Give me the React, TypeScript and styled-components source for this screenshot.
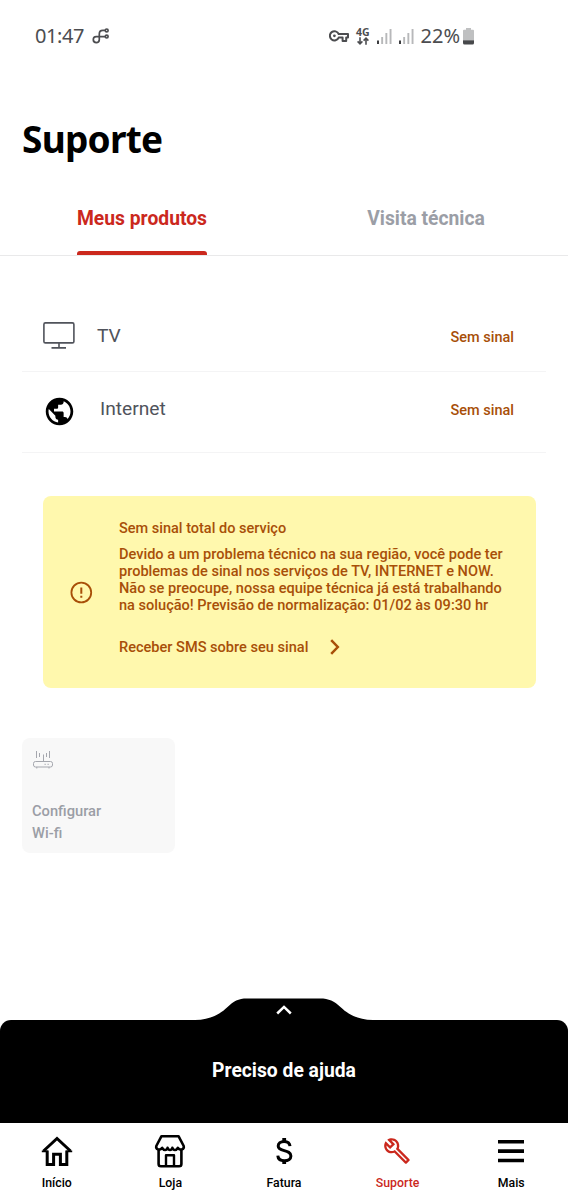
import React from "react";
import styled, { createGlobalStyle } from "styled-components";
import { MdOutlineBuild, MdPublic } from "react-icons/md";

const palette = {
  red: "#cb281d",
  muted: "#9b9ea6",
  slate: "#50535b",
  warning: "#a84f08",
  warningBg: "#fff8ad",
  line: "#f4f4f5",
};

const GlobalStyle = createGlobalStyle`
  *, *::before, *::after { box-sizing: border-box; }
  body { margin: 0; background: #fff; font-family: Roboto, "Liberation Sans", sans-serif; }
  svg { display: block; flex: none; }
`;

const Screen = styled.div`
  width: 568px;
  height: 1200px;
  display: flex;
  flex-direction: column;
  overflow: hidden;
  background: #fff;
`;

const StatusBar = styled.header`
  height: 72px;
  padding: 0 94px 0 35px;
  display: flex;
  align-items: center;
  justify-content: space-between;
  color: #4c4d50;
  font-family: "Noto Sans", sans-serif;
  font-size: 20px;
`;

const StatusGroup = styled.div<{ $gap: number }>`
  display: flex;
  align-items: center;
  gap: ${(p) => p.$gap}px;
`;

const StatusText = styled.span<{ $spacing: number }>`
  letter-spacing: ${(p) => p.$spacing}px;
  line-height: 24px;
`;

const Title = styled.h1`
  height: 110px;
  margin: 0;
  padding: 42px 22px 0;
  font-family: "Noto Sans", sans-serif;
  font-size: 37px;
  line-height: 50px;
  font-weight: 700;
  letter-spacing: -0.75px;
  color: #000;
`;

const Tabs = styled.nav`
  height: 74px;
  display: grid;
  grid-template-columns: 1fr 1fr;
  justify-items: center;
  border-bottom: 1px solid #e9e9ea;
`;

const Tab = styled.a<{ $active?: boolean }>`
  display: flex;
  flex-direction: column;
  justify-content: space-between;
  padding-top: 25px;
  height: 73px;
  font-size: 19.3px;
  line-height: 24px;
  font-weight: 700;
  color: ${(p) => (p.$active ? palette.red : palette.muted)};
  &::after {
    content: "";
    height: 4px;
    border-radius: 3px 3px 0 0;
    background: ${(p) => (p.$active ? palette.red : "transparent")};
  }
`;

const Products = styled.ul`
  list-style: none;
  margin: 44px 22px 0;
  padding: 0;
`;

const Product = styled.li<{ $height: number; $drop: number }>`
  height: ${(p) => p.$height}px;
  padding: ${(p) => p.$drop}px 32px 0 21px;
  display: flex;
  align-items: flex-start;
  border-bottom: 1px solid ${palette.line};
`;

const ProductIcon = styled.span<{ $width: number }>`
  width: ${(p) => p.$width}px;
  margin-top: -2px;
`;

const ProductName = styled.span`
  flex: 1;
  font-size: 19.2px;
  line-height: 24px;
  color: ${palette.slate};
`;

const ProductState = styled.span`
  padding-top: 2px;
  font-size: 14.5px;
  line-height: 24px;
  font-weight: 500;
  color: ${palette.warning};
`;

const Notice = styled.section`
  width: 493px;
  height: 192px;
  margin: 43px 0 0 43px;
  padding-left: 27px;
  display: flex;
  align-items: center;
  gap: 26px;
  border-radius: 8px;
  background: ${palette.warningBg};
  color: ${palette.warning};
  font-size: 14.57px;
  font-weight: 500;
`;

const NoticeBody = styled.div`
  height: 100%;
  padding-top: 23px;
  white-space: nowrap;
`;

const NoticeTitle = styled.h2`
  margin: 0 0 7px;
  font: inherit;
  font-size: 14.5px;
  line-height: 20px;
`;

const NoticeText = styled.p`
  margin: 0;
  line-height: 17px;
`;

const NoticeLink = styled.a`
  margin-top: 23px;
  display: flex;
  align-items: center;
  gap: 22px;
  line-height: 20px;
`;

const Tile = styled.button`
  width: 153px;
  height: 115px;
  margin: 50px 0 0 22px;
  padding: 12px 10px 9px;
  display: flex;
  flex-direction: column;
  align-items: flex-start;
  justify-content: space-between;
  border: 0;
  border-radius: 8px;
  background: #f8f8f8;
  color: ${palette.muted};
  font-family: inherit;
  font-size: 14.7px;
  line-height: 21.5px;
  font-weight: 500;
  text-align: left;
`;

const HelpSheet = styled.section`
  margin-top: auto;
  display: flex;
  flex-direction: column;
  align-items: center;
`;

const HelpLabel = styled.div`
  width: 100%;
  height: 103px;
  padding-bottom: 2px;
  display: flex;
  align-items: center;
  justify-content: center;
  border-radius: 11px 11px 0 0;
  background: #000;
  color: #fff;
  font-size: 19.3px;
  font-weight: 700;
`;

const BottomNav = styled.nav`
  height: 77px;
  display: grid;
  grid-template-columns: repeat(5, 1fr);
`;

const NavItem = styled.a<{ $active?: boolean }>`
  display: flex;
  flex-direction: column;
  align-items: center;
  padding-top: 10px;
  gap: 5px;
  color: ${(p) => (p.$active ? palette.red : "#000")};
  font-size: 12.3px;
  line-height: 18px;
  font-weight: 500;
`;

const NavIcon = styled.span`
  width: 32px;
  height: 36px;
  display: flex;
  align-items: center;
  justify-content: center;
`;

const LoopIcon = () => (
  <svg width="18" height="16" viewBox="0 0 18 16" fill="none" stroke="currentColor" strokeWidth="1.700">
    <path d="M13 2.400H10.800C8.400 2.400 7.300 3.700 7.300 5.900V11.700a3 3 0 1 1-3.100-3.100h9" />
    <circle cx="14.700" cy="2.400" r="1.400" />
    <circle cx="14.700" cy="8.600" r="1.400" />
  </svg>
);

const KeyIcon = () => (
  <svg width="20" height="12" viewBox="0 0 20 12" fill="none" stroke="currentColor" strokeWidth="2" strokeLinejoin="round">
    <path d="M9.700 4H19v3.600h-1.800V11h-3.600V7.600H9.700A4.600 4.600 0 1 1 9.700 4Z" />
    <circle cx="5.400" cy="5.800" r="1.400" fill="currentColor" stroke="none" />
  </svg>
);

const NetworkType = styled.span`
  display: flex;
  flex-direction: column;
  align-items: center;
  font-size: 10.5px;
  line-height: 9px;
  font-weight: 700;
`;

const ArrowsIcon = () => (
  <svg width="12" height="8" viewBox="0 0 12 8" fill="none" stroke="currentColor" strokeWidth="1.600">
    <path d="M3 .3v6.400M.6 4.400 3 6.800l2.400-2.400M9 7.700V1.300M6.600 3.600 9 1.200l2.400 2.400" />
  </svg>
);

const SignalIcon = () => (
  <svg width="15" height="15" viewBox="0 0 15 15">
    <path d="M0 11.500h2V15H0z" fill="#3c3d40" />
    <path d="M4.200 8h1.900v7H4.200zM8.400 4h1.900v11H8.400zM12.600 0h1.900v15h-1.900z" fill="#b7b8ba" />
  </svg>
);

const BatteryIcon = () => (
  <svg width="11" height="17" viewBox="0 0 11 17">
    <path d="M3 0h5v1.800h2a1 1 0 0 1 1 1V12H0V2.800a1 1 0 0 1 1-1h2z" fill="#bfc0c1" />
    <path d="M0 12.300h11V15a1.500 1.500 0 0 1-1.500 1.500h-8A1.500 1.500 0 0 1 0 15z" fill="#47484b" />
  </svg>
);

const MonitorIcon = () => (
  <svg width="32" height="27" viewBox="0 0 32 27" fill="none" stroke={palette.slate} strokeWidth="1.600">
    <rect x=".9" y=".9" width="30" height="20" rx="1.500" />
    <path d="M16 21v4.600M8.500 25.900h14.500" />
  </svg>
);

const AlertIcon = () => (
  <svg width="23" height="23" viewBox="0 0 23 23" fill="none" stroke="currentColor" strokeWidth="1.800">
    <circle cx="11.300" cy="11.500" r="9.900" />
    <path d="M11.300 6.500v6.300M11.300 14.700v2.100" strokeWidth="2" />
  </svg>
);

const ChevronRight = () => (
  <svg width="10" height="16" viewBox="0 0 10 16" fill="none" stroke="currentColor" strokeWidth="2.500">
    <path d="m1.200 1.200 6.600 6.800-6.600 6.800" />
  </svg>
);

const RouterIcon = () => (
  <svg width="22" height="19" viewBox="0 0 22 19" fill="none" stroke="#a5a7ae" strokeWidth="1">
    <rect x="1.500" y="11.500" width="19" height="5.500" rx="2" />
    <path d="M11.500 4.500v7M7.500 3v4M14.500 3v4M4.500 1v7M17.500 1v7M4.800 17v1.500M17 17v1.500M12.500 14.300h1.300M15.500 14.300h1.300" />
  </svg>
);

const SheetHandle = () => (
  <svg width="178" height="22" viewBox="0 0 178 22">
    <path d="M0 22C16 21.700 25 16 32 9.500 39 3 43 .5 52 .5h73c9 0 14 2.500 21 9 7 6.500 16 12.200 32 12.500Z" fill="#000" />
    <path d="m82.200 15.500 6.800-6.600 6.800 6.600" fill="none" stroke="#fff" strokeWidth="2.500" />
  </svg>
);

const HomeIcon = () => (
  <svg width="32" height="36" viewBox="0 0 32 36" fill="none" stroke="currentColor" strokeWidth="3">
    <path d="M6.200 17.500v14h6.400V21.300h6.800v10.200h6.400v-14" />
    <path d="M2.500 18 16 5.500 29.500 18" />
    <path d="M.8 18.300h6M25.200 18.300h6" strokeWidth="1.800" />
  </svg>
);

const StoreIcon = () => (
  <svg width="32" height="36" viewBox="0 0 32 36" fill="none" stroke="currentColor" strokeWidth="2.600" strokeLinejoin="round">
    <path d="M7.500 3.200h17l5.200 9.800c.8 3.400-3.700 5-5.900 1.800-1.600 2.900-4.400 2.900-5.400 0-1 2.900-3.800 2.900-4.800 0-1 2.900-3.800 2.900-5.400 0-2.200 3.200-6.700 1.600-5.900-1.800Z" />
    <path d="M4.600 16.500v14.500q0 2.300 2.300 2.300h18.200q2.300 0 2.300-2.300V16.500" />
    <path d="M12 33V22.200h8V33" strokeWidth="2.400" />
  </svg>
);

const DollarIcon = () => (
  <svg width="32" height="36" viewBox="0 0 32 36" fill="none" stroke="currentColor" strokeWidth="3">
    <path d="M22 13.200c-.3-3-2.600-4.700-5.900-4.700-3.500 0-5.900 1.800-5.900 4.500 0 6.300 12.700 3 12.700 10.100 0 2.800-2.500 4.700-6.500 4.700-4.100 0-6.400-2-6.600-5.100" />
    <path d="M16.200 5v4M16.200 27v4" strokeWidth="3.800" />
  </svg>
);

const WrenchIcon = styled(MdOutlineBuild).attrs({ size: 28 })`
  margin-right: 2px;
`;

const MenuIcon = () => (
  <svg width="32" height="36" viewBox="0 0 32 36" fill="currentColor">
    <path d="M3 7h26v3.600H3zM3 16.300h26v3.600H3zM3 25.700h26v3.600H3z" />
  </svg>
);

const navItems = [
  { label: "Início", Icon: HomeIcon },
  { label: "Loja", Icon: StoreIcon },
  { label: "Fatura", Icon: DollarIcon },
  { label: "Suporte", Icon: WrenchIcon, active: true },
  { label: "Mais", Icon: MenuIcon },
];

export default function App() {
  return (
    <Screen>
      <GlobalStyle />
      <StatusBar>
        <StatusGroup $gap={8}>
          <StatusText $spacing={-0.4}>01:47</StatusText>
          <LoopIcon />
        </StatusGroup>
        <StatusGroup $gap={7}>
          <KeyIcon />
          <NetworkType>
            4G
            <ArrowsIcon />
          </NetworkType>
          <SignalIcon />
          <SignalIcon />
          <StatusGroup $gap={3}>
            <StatusText $spacing={0}>22%</StatusText>
            <BatteryIcon />
          </StatusGroup>
        </StatusGroup>
      </StatusBar>

      <Title>Suporte</Title>

      <Tabs>
        <Tab $active>Meus produtos</Tab>
        <Tab>Visita técnica</Tab>
      </Tabs>

      <Products>
        <Product $height={72} $drop={24}>
          <ProductIcon $width={54}>
            <MonitorIcon />
          </ProductIcon>
          <ProductName>TV</ProductName>
          <ProductState>Sem sinal</ProductState>
        </Product>
        <Product $height={81} $drop={25}>
          <ProductIcon $width={57}>
            <MdPublic size={33} color="#000" />
          </ProductIcon>
          <ProductName>Internet</ProductName>
          <ProductState>Sem sinal</ProductState>
        </Product>
      </Products>

      <Notice>
        <AlertIcon />
        <NoticeBody>
          <NoticeTitle>Sem sinal total do serviço</NoticeTitle>
          <NoticeText>
            Devido a um problema técnico na sua região, você pode ter
            <br />
            problemas de sinal nos serviços de TV, INTERNET e NOW.
            <br />
            Não se preocupe, nossa equipe técnica já está trabalhando
            <br />
            na solução! Previsão de normalização: 01/02 às 09:30 hr
          </NoticeText>
          <NoticeLink>
            Receber SMS sobre seu sinal
            <ChevronRight />
          </NoticeLink>
        </NoticeBody>
      </Notice>

      <Tile>
        <RouterIcon />
        <span>
          Configurar
          <br />
          Wi-fi
        </span>
      </Tile>

      <HelpSheet>
        <SheetHandle />
        <HelpLabel>Preciso de ajuda</HelpLabel>
      </HelpSheet>

      <BottomNav>
        {navItems.map(({ label, Icon, active }) => (
          <NavItem key={label} $active={active}>
            <NavIcon>
              <Icon />
            </NavIcon>
            {label}
          </NavItem>
        ))}
      </BottomNav>
    </Screen>
  );
}
